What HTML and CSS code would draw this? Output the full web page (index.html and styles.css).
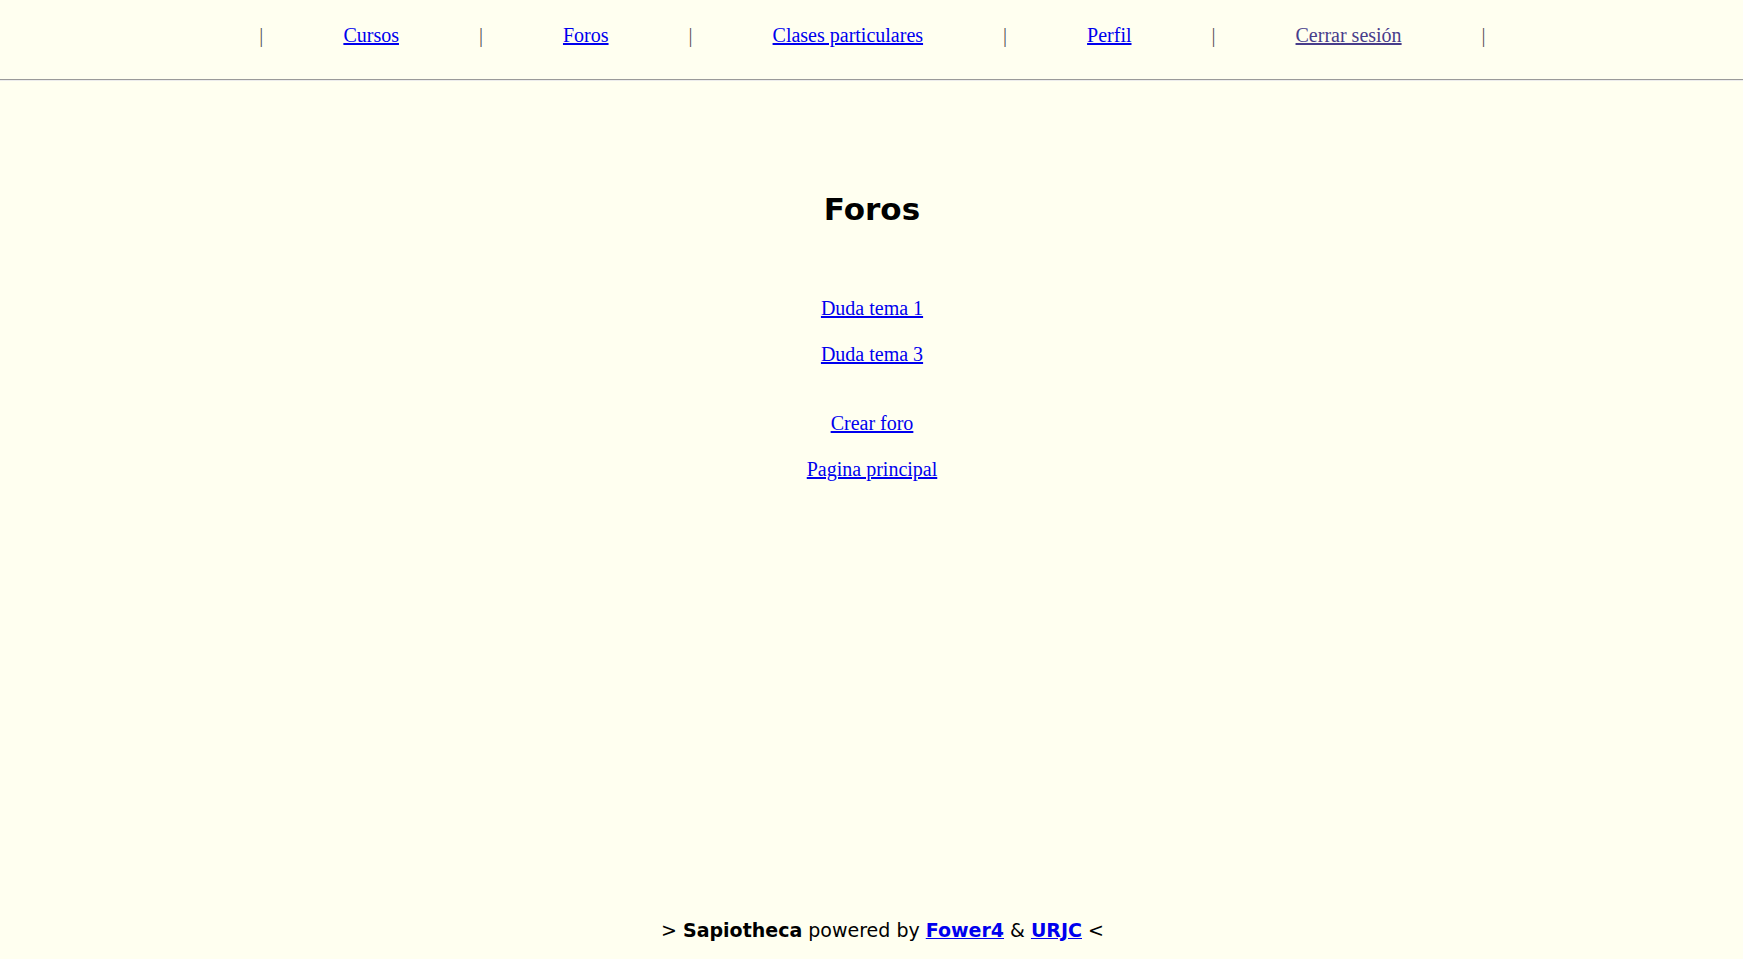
FILE: index.html
```html
<!DOCTYPE html>
<html lang="es">
<head>
<meta charset="utf-8">
<title>Foros</title>
<link rel="stylesheet" href="styles.css">
</head>
<body>
<div class="page">
  <nav class="nav">
    <span class="sep">|</span>
    <a class="nav-link" href="#">Cursos</a>
    <span class="sep">|</span>
    <a class="nav-link" href="#">Foros</a>
    <span class="sep">|</span>
    <a class="nav-link" href="#">Clases particulares</a>
    <span class="sep">|</span>
    <a class="nav-link" href="#">Perfil</a>
    <span class="sep">|</span>
    <a class="nav-link visited" href="#">Cerrar sesión</a>
    <span class="sep">|</span>
  </nav>
  <div class="rule"></div>
  <main class="main">
    <h1 class="title">Foros</h1>
    <div class="list">
      <a class="link" href="#">Duda tema 1</a>
      <a class="link" href="#">Duda tema 3</a>
    </div>
    <div class="list actions">
      <a class="link" href="#">Crear foro</a>
      <a class="link" href="#">Pagina principal</a>
    </div>
  </main>
  <footer class="footer">
    &gt; <b>Sapiotheca</b> powered by <a class="foot-link" href="#">Fower4</a> &amp; <a class="foot-link" href="#">URJC</a> &lt;
  </footer>
</div>
</body>
</html>
```

FILE: styles.css
```css
html, body {
  margin: 0;
  padding: 0;
  background: #fffff0;
}

.page {
  min-height: 100vh;
  display: flex;
  flex-direction: column;
  font-family: "Liberation Serif", "Times New Roman", serif;
  font-size: 20px;
  color: #000;
}

.nav {
  display: flex;
  justify-content: center;
  align-items: baseline;
  padding: 24px 0 32px 2px;
  line-height: 23px;
}

.sep {
  color: #555555;
}

.nav-link {
  margin: 0 80px;
  color: #0000ee;
}

.nav-link.visited {
  color: #483d8b;
}

.rule {
  border-top: 1px solid #9a9a9a;
  border-bottom: 1px solid #ececec;
}

.main {
  flex: 1;
  display: flex;
  flex-direction: column;
  align-items: center;
  padding: 110px 0 0 1px;
}

.title {
  margin: 0;
  font-family: "DejaVu Sans", Verdana, sans-serif;
  font-weight: bold;
  font-size: 31px;
  line-height: 37px;
}

.list {
  display: flex;
  flex-direction: column;
  align-items: center;
  gap: 23px;
  margin-top: 69px;
  line-height: 23px;
}

.list.actions {
  margin-top: 46px;
}

.link {
  color: #0000ee;
}

.footer {
  text-align: center;
  font-family: "DejaVu Sans", Verdana, sans-serif;
  font-size: 19px;
  line-height: 22px;
  padding: 0 0 18px 22px;
}

.foot-link {
  color: #0000ee;
  font-weight: bold;
}
```
